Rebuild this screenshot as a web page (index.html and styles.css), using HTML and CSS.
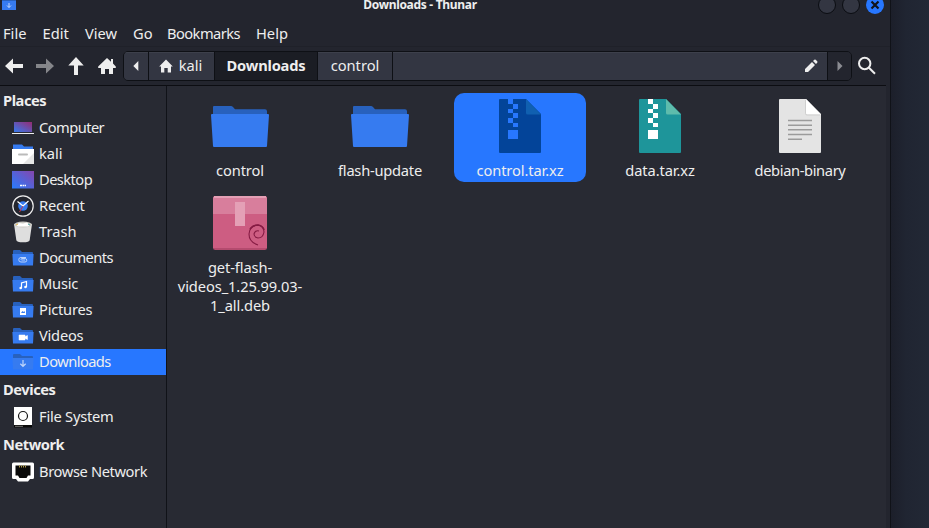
FILE: index.html
```
<!DOCTYPE html>
<html lang="en">
<head>
<meta charset="utf-8">
<title>Downloads - Thunar</title>
<link rel="stylesheet" href="styles.css">
</head>
<body>
<svg class="defs" width="0" height="0">
  <defs>
    <linearGradient id="screen" x1="0" y1="1" x2="1" y2="0"><stop offset="0" stop-color="#367bf0"/><stop offset="1" stop-color="#952b72"/></linearGradient>
    <linearGradient id="desk" x1="0" y1="1" x2="1" y2="0"><stop offset="0" stop-color="#277cff"/><stop offset="1" stop-color="#8646ad"/></linearGradient>
    <symbol id="small-folder" viewBox="0 0 22 22"><path d="M1 4Q1 3 2 3h6l2 2h10q1 0 1 1v3H1z" fill="#2861bd"/><path d="M.4 7h21.2L21 18.5H1z" fill="#367bf0"/></symbol>
    <symbol id="folder" viewBox="0 0 64 64"><path d="M5 13q0-1 1-1h17q1 0 2 1l2 2.300h30q2 0 2 2V24H5z" fill="#2861bd"/><path d="M4 20h56q1 0 1 1l-2 31q0 1-1 1H6q-1 0-1-1L3 21q0-1 1-1z" fill="#367bf0"/></symbol>
  </defs>
</svg>
<div class="screen">
  <div class="window">
    <header class="titlebar">
      <svg class="title-icon" width="16" height="16" viewBox="0 0 16 16"><path d="M1 2h5l1 1h8v5H1z" fill="#2861bd"/><path d="M1 6h14v9H1z" fill="#367bf0"/><path d="M8 8v4.500M6 10.500l2 2 2-2" stroke="#c3d8fb" fill="none"/></svg>
      <div class="title">Downloads - Thunar</div>
      <div class="controls"><i></i><i></i><i class="close"><svg width="18" height="18" viewBox="0 0 18 18"><path d="M5.500 5.500l7 7m0-7l-7 7" stroke="#10131b" stroke-width="2.200"/></svg></i></div>
    </header>
    <nav class="menubar"><span>File</span><span>Edit</span><span>View</span><span>Go</span><span class="tight">Bookmarks</span><span>Help</span></nav>
    <div class="toolbar">
      <svg class="tool" viewBox="0 0 20 20"><path d="M1 10l8-7.500V8h10v4H9v5.500z"/></svg>
      <svg class="tool dim" viewBox="0 0 20 20"><path d="M19 10l-8-7.500V8H1v4h10v5.500z"/></svg>
      <svg class="tool" viewBox="0 0 20 20"><path d="M10 1l7.700 8.500H12V19H8V9.500H2.300z"/></svg>
      <svg class="tool" viewBox="0 0 20 20"><path d="M10 2l4 3.700V3h2v4.500l2.800 3V12H16v6h-4v-5H8v5H4v-6H1.200v-1.500z"/></svg>
      <div class="pathbar">
        <div class="seg left"><svg width="6" height="10" viewBox="0 0 6 10"><path d="M5.300 0v10L.3 5z" fill="#eee"/></svg></div>
        <div class="seg home"><svg width="14" height="14" viewBox="0 0 14 14"><path d="M7 .5l6.800 7H12V13.500H8.700V9H5.300v4.500H2V7.500H.2z" fill="#eee"/></svg><span>kali</span></div>
        <div class="seg current">Downloads</div>
        <div class="seg child">control</div>
        <div class="seg rest"><svg width="14" height="14" viewBox="0 0 14 14"><path d="M1 10l7-7 3 3-7 7H1zM9 2l1.300-1.200q.7-.6 1.400 0l1.500 1.500q.6.700 0 1.400L12 5z" fill="#eee"/></svg></div>
        <div class="seg right"><svg width="6" height="10" viewBox="0 0 6 10"><path d="M.5 0v10l5-5z" fill="#8b8c92"/></svg></div>
      </div>
      <svg class="search" width="20" height="20" viewBox="0 0 20 20"><circle cx="7.700" cy="7.500" r="5.700"/><path d="M11.700 11.500l6.300 6.300"/></svg>
    </div>
    <div class="body">
      <aside class="sidebar">
        <h2>Places</h2>
        <div class="row"><svg viewBox="0 0 22 22"><path d="M2 5h18v10H2z" fill="url(#screen)"/><path d="M0 16h22v1H0z" fill="#eee"/></svg><span class="tight">Computer</span></div>
        <div class="row"><svg viewBox="0 0 22 22"><path d="M1 1.500h9l2 2h9V8H1z" fill="#367bf0"/><path d="M0 6h22v15H0z" fill="#fff"/><path d="M22 10v11H11z" fill="#e6e6e6"/><path d="M7 11.500h8" stroke="#bbb" stroke-width="2" stroke-linecap="round"/></svg><span>kali</span></div>
        <div class="row"><svg viewBox="0 0 22 22"><path d="M0 2h22v17.500H0z" fill="url(#desk)"/><path d="M8 16.500h2m.5 0h1.500m.5 0H14" stroke="#fff" stroke-width="1.500"/></svg><span class="tight">Desktop</span></div>
        <div class="row"><svg viewBox="0 0 22 22"><circle cx="11" cy="11" r="10.200" fill="#23252e" stroke="#eee" stroke-width="1.200"/><circle cx="11" cy="11" r="4.800" fill="#367bf0"/><path d="M5.500 6.500L11 11l5.500-5" stroke="#fff" stroke-width="1.200" fill="none"/><path d="M11 11l-3.500 6" stroke="#c0394f"/></svg><span class="snug">Recent</span></div>
        <div class="row"><svg viewBox="0 0 22 22"><path d="M2 3l2.300 16q.2 2.300 6.700 2.300t6.700-2.300L20 3z" fill="#dedede"/><ellipse cx="11" cy="3.500" rx="9" ry="3" fill="#c8c8c3"/><path d="M4 4l3-2 4 .5 4-1 3 2.500-2 1.500H6z" fill="#fff"/><path d="M4 4l2-1" stroke="#e5b74b"/><path d="M16 3l2 1" stroke="#4a9c9b"/></svg><span>Trash</span></div>
        <div class="row"><svg viewBox="0 0 22 22"><use href="#small-folder"/><path d="M14 10.500H9a2 2 0 0 0 0 4.500h4a1.500 1.500 0 0 0 0-3.500H9.500q-1 1 0 1.500H13" stroke="#b9d1fa" fill="none"/></svg><span class="tight">Documents</span></div>
        <div class="row"><svg viewBox="0 0 22 22"><use href="#small-folder"/><path d="M9.500 15V10l5-1.500v5.500" stroke="#fff" stroke-width="1.200" fill="none"/><circle cx="8.700" cy="15" r="1.300" fill="#fff"/><circle cx="13.500" cy="14" r="1.300" fill="#fff"/></svg><span class="snug">Music</span></div>
        <div class="row"><svg viewBox="0 0 22 22"><use href="#small-folder"/><path d="M8 9h6v7H8z" fill="#fff"/><path d="M9 14l1.500-2 1 1 1-1 .5 2z" fill="#367bf0"/></svg><span class="snug">Pictures</span></div>
        <div class="row"><svg viewBox="0 0 22 22"><use href="#small-folder"/><path d="M7 10h6v1.500l2.500-1v4L13 13.500V15H7z" fill="#fff" stroke="#fff" stroke-width=".5"/></svg><span class="snug">Videos</span></div>
        <div class="row active"><svg viewBox="0 0 22 22"><use href="#small-folder"/><path d="M11 9v6M8.300 12.700L11 15.300l2.700-2.600" stroke="#bdd4fa" stroke-width="1.200" fill="none"/></svg><span class="tight">Downloads</span></div>
        <h2>Devices</h2>
        <div class="row"><svg viewBox="0 0 22 22"><path d="M2 1h18v18H2z" fill="#fff"/><path d="M2 19h18v2.500H2z" fill="#090909"/><path d="M3 20.300h8" stroke="#777"/><circle cx="11" cy="10" r="4.500" fill="none" stroke="#171717" stroke-width="1.200"/></svg><span class="snug">File System</span></div>
        <h2>Network</h2>
        <div class="row"><svg viewBox="0 0 22 22"><path d="M1.500 1.500h19q1.500 0 1.500 1.500V16.500q0 1.500-1.500 1.500H18L16 20.500H6L4 18H1.500Q0 18 0 16.500V3Q0 1.500 1.500 1.500z" fill="#fff"/><path d="M3.500 4.500h15v10H16L14.500 17h-7L6 14.500H3.500z" fill="#090909"/><path d="M7.500 4.500v2m2-2v2m2-2v2m2-2v2" stroke="#a89545"/></svg><span class="net">Browse Network</span></div>
      </aside>
      <main class="files">
        <div class="file"><svg viewBox="0 0 64 64"><use href="#folder"/></svg><span>control</span></div>
        <div class="file"><svg viewBox="0 0 64 64"><use href="#folder"/></svg><span class="snug">flash-update</span></div>
        <div class="file selected"><svg viewBox="0 0 64 64"><path d="M12 5h26l15 15v38q0 1-1 1H12q-1 0-1-1V6q0-1 1-1z" fill="#034499"/><path d="M38 5l15 15.500H39.500q-1.500 0-1.500-1.500z" fill="#1060b0"/><path class="zip" d="M20 5h5v5h-5zM25 10h5v4.700h-5zM20 14.700h5v4.600h-5zM25 19.300h5V24h-5zM20 24h5v4.700h-5zM25 28.700h5v4.600h-5zM20 36h10v9H20z" fill="#2777ff"/></svg><span>control.tar.xz</span></div>
        <div class="file"><svg viewBox="0 0 64 64"><path d="M12 5h26l15 15v38q0 1-1 1H12q-1 0-1-1V6q0-1 1-1z" fill="#1e959a"/><path d="M38 5l15 15.500H39.500q-1.500 0-1.500-1.500z" fill="#5ebcac"/><path class="zip" d="M20 5h5v5h-5zM25 10h5v4.700h-5zM20 14.700h5v4.600h-5zM25 19.300h5V24h-5zM20 24h5v4.700h-5zM25 28.700h5v4.600h-5zM20 36h10v9H20z" fill="#fff"/></svg><span>data.tar.xz</span></div>
        <div class="file"><svg viewBox="0 0 64 64"><path d="M12 5h26l15 15v38q0 1-1 1H12q-1 0-1-1V6q0-1 1-1z" fill="#e4e4e4"/><path d="M38 5l15 15.500H39.500q-1.500 0-1.500-1.500z" fill="#fff"/><path d="M37.500 6v13.500q0 1.500 1.500 1.500h13" stroke="#cfcfcf" fill="none"/><path d="M20 26.500h24M20 31.200h24M20 35.800h24M20 40.500h24M20 45.200h14" stroke="#9b9b9b" stroke-width="1.400"/></svg><span class="net">debian-binary</span></div>
        <div class="file"><svg viewBox="0 0 64 64"><rect x="5" y="5" width="54" height="54" rx="2.500" fill="#b44b6e"/><path d="M5 22h54v35H5z" fill="#cd5d82"/><path d="M5 7.500Q5 5 7.500 5h49Q59 5 59 7.500V23H5z" fill="#d87e9c"/><path d="M6 6h52" stroke="#e49fb5" stroke-width="2"/><path d="M27 11h10v24H27z" fill="#e4a0b6"/><path d="M50 54q-9-3-9-11 1-9 9-9 6 1 6 7-1 6-6 6-4-1-4-4 1-4 5-3" fill="none" stroke="#851b43" stroke-width="1.100"/><path d="M42 38q3-4 8-4 5 1 6 5" fill="none" stroke="#851b43" stroke-width="1.700"/></svg><span>get-flash-<br>videos_1.25.99.03-<br>1_all.deb</span></div>
      </main>
    </div>
  </div>
  <div class="desktop"></div>
</div>
</body>
</html>
```
FILE: styles.css
```
* { box-sizing: border-box; }
body { margin: 0; overflow: hidden; background: #202532; color: #eee; font: 14.67px/19px "Noto Sans", sans-serif; }
svg { display: block; flex: none; }
.defs { position: absolute; }
.screen { display: flex; width: 929px; height: 528px; }
.window { width: 891px; height: 528px; background: #23252e; border-right: 1px solid #101218; display: flex; flex-direction: column; }
.titlebar { height: 20px; display: grid; grid-template-columns: 80px 1fr 80px; }
.title-icon { margin: -5px 0 0 1px; }
.title { font-size: 12px; font-weight: 700; line-height: 10px; letter-spacing: -.3px; text-align: center; padding-right: 50px; white-space: nowrap; }
.controls { display: flex; gap: 6px; justify-content: flex-end; margin: -4px 6px 0 0; }
.controls i { flex: none; width: 18px; height: 18px; border: 1px solid #0b0d12; border-radius: 50%; background: #333642; }
.controls .close { border: 0; background: #2777ff; }
.menubar { height: 27px; padding: 4px 3px 0; display: grid; grid-template-columns: 39.500px 42.500px 48px 34px 89px auto; justify-content: start; border-bottom: 1px solid #1f2129; }
.tight { letter-spacing: -.55px; }
.snug { letter-spacing: -.23px; }
.net { letter-spacing: -.37px; }
.toolbar { height: 39px; display: flex; align-items: center; padding: 0 0 1px 4px; border-bottom: 1px solid #0c0d12; margin-right: 4px; }
.tool { width: 20px; height: 20px; margin-right: 11px; fill: #eee; }
.dim { fill: #85868a; }
.pathbar { display: flex; width: 729px; height: 30px; margin-left: -5px; border: 1px solid #0e1015; border-radius: 5px; overflow: hidden; }
.seg { display: flex; align-items: center; justify-content: center; background: #333642; border-right: 1px solid #0e1015; box-shadow: inset 0 1px #3d404b; }
.left { width: 25px; }
.home { width: 66px; gap: 6px; padding-right: 2px; }
.current { width: 103px; background: #1b1d24; font-weight: 700; letter-spacing: -.2px; box-shadow: none; }
.child { width: 75px; }
.rest { flex: 1; justify-content: flex-end; padding-right: 9px; }
.right { width: 23px; background: #23252e; border: 0; box-shadow: none; }
.search { margin-left: 5px; fill: none; stroke: #eee; stroke-width: 2; }
.body { flex: 1; display: flex; width: 886px; background: #282a33; }
.sidebar { width: 167px; border-right: 1px solid #101218; }
.sidebar h2 { height: 29px; margin: 0; padding: 0 3px; font-size: 14.67px; line-height: 29px; letter-spacing: -.45px; }
.row { display: flex; align-items: center; height: 26px; padding-left: 12px; gap: 5px; white-space: nowrap; }
.row svg { width: 22px; height: 22px; }
.row span { padding-bottom: 2px; }
.active { background: #2777ff; }
.files { flex: 1; display: grid; grid-template-columns: repeat(5, 132px); grid-auto-rows: 89px; gap: 8px; padding: 7px 0 0 7px; align-content: start; }
.file { display: flex; flex-direction: column; align-items: center; gap: 3px; padding-top: 1px; border-radius: 10px; text-align: center; white-space: nowrap; letter-spacing: -.1px; }
.file svg { width: 64px; height: 64px; }
.zip { shape-rendering: crispEdges; }
.selected { background: #2777ff; }
.desktop { flex: 1; background: linear-gradient(90deg, #1c1f2a, #202532 40%, #222835); }
```
